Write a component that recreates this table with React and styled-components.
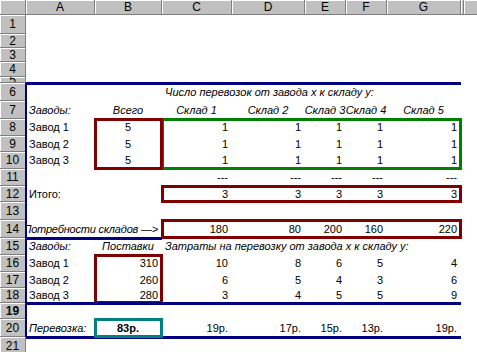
import React from 'react';
import styled, { createGlobalStyle } from 'styled-components';

const GlobalStyle = createGlobalStyle`
  html, body {
    margin: 0;
    padding: 0;
    background: #fff;
    overflow: hidden;
  }
  body {
    font-family: "Liberation Sans", Arial, sans-serif;
  }
`;

// column widths: row header, A..G, hidden H, I
const COLS = [26, 69, 67, 70, 73, 41, 41, 74, 3, 40];
// header + rows 1..21
const ROWS = [15, 19, 14, 14, 15, 6, 18, 18, 17, 16, 17, 17, 16, 18, 18, 17, 17, 16, 15, 16, 18, 18];
const LETTERS = ['A', 'B', 'C', 'D', 'E', 'F', 'G', '', 'I'];

const NAVY = '#000080';
const BROWN = '#800000';
const GREEN = '#008000';
const TEAL = '#008080';

const Sheet = styled.div`
  display: grid;
  grid-template-columns: ${COLS.map((w) => w + 'px').join(' ')};
  grid-template-rows: ${ROWS.map((h) => h + 'px').join(' ')};
  width: 477px;
  height: 352px;
  overflow: hidden;
  font-size: 11px;
  color: #000;
`;

const Corner = styled.div`
  grid-row: 1;
  grid-column: 1;
  background: #c0c0c0;
  border-right: 1px solid #808080;
  border-bottom: 1px solid #808080;
  box-shadow: inset 1px 1px 0 #fff;
`;

const ColHead = styled.div`
  grid-row: 1;
  grid-column: ${(p) => p.$c + 1};
  background: #c0c0c0;
  border-right: 1px solid #808080;
  border-bottom: 1px solid #808080;
  box-shadow: inset 1px 1px 0 #fff;
  display: flex;
  align-items: center;
  justify-content: center;
  font-size: 12px;
  line-height: 14px;
  overflow: hidden;
`;

const RowHead = styled.div`
  grid-row: ${(p) => p.$r + 1};
  grid-column: 1;
  background: #c0c0c0;
  border-right: 1px solid #808080;
  border-bottom: 1px solid #808080;
  box-shadow: inset 1px 1px 0 #fff;
  display: flex;
  align-items: center;
  justify-content: center;
  font-size: 12px;
  line-height: 14px;
  font-weight: ${(p) => (p.$bold ? 700 : 400)};
  overflow: hidden;
`;

const Cell = styled.div`
  grid-row: ${(p) => p.$r + 1};
  grid-column: ${(p) => p.$c + 1} / span ${(p) => p.$span || 1};
  display: flex;
  align-items: center;
  justify-content: ${(p) =>
    p.$align === 'right' ? 'flex-end' : p.$align === 'center' ? 'center' : 'flex-start'};
  padding: 0 4px 0 3px;
  white-space: nowrap;
  font-style: ${(p) => (p.$italic ? 'italic' : 'normal')};
  font-weight: ${(p) => (p.$bold ? 700 : 400)};
  overflow: ${(p) => (p.$clip ? 'hidden' : 'visible')};
  letter-spacing: ${(p) => (p.$clip ? '-0.2px' : 'normal')};
  line-height: 13px;
`;

const Frame = styled.div`
  grid-row: ${(p) => p.$r1 + 1} / ${(p) => p.$r2 + 2};
  grid-column: ${(p) => p.$c1 + 1} / ${(p) => p.$c2 + 2};
  border: 3px solid ${(p) => p.$color};
  margin: -1px;
  pointer-events: none;
`;

const Rule = styled.div`
  grid-row: ${(p) => p.$r + 1};
  grid-column: ${(p) => p.$c1 + 1} / ${(p) => p.$c2 + 2};
  align-self: start;
  height: 3px;
  margin-top: -1px;
  background: ${NAVY};
`;

const SideRule = styled.div`
  grid-row: 7 / 22;
  grid-column: 2;
  justify-self: start;
  width: 2px;
  margin-left: -1px;
  background: ${NAVY};
`;

const plants = [
  { name: 'Завод 1', supply: 310, cost: [10, 8, 6, 5, 4] },
  { name: 'Завод 2', supply: 260, cost: [6, 5, 4, 3, 6] },
  { name: 'Завод 3', supply: 280, cost: [3, 4, 5, 5, 9] },
];
const demand = [180, 80, 200, 160, 220];
const totals = [3, 3, 3, 3, 3];
const costs = ['19р.', '17р.', '15р.', '13р.', '19р.'];

const App = () => (
  <>
    <GlobalStyle />
    <Sheet>
      <Corner />
      {LETTERS.map((l, i) => (
        <ColHead key={i} $c={i + 1}>
          {l}
        </ColHead>
      ))}
      {Array.from({ length: 21 }, (_, i) => (
        <RowHead key={i} $r={i + 1} $bold={i + 1 === 19}>
          {i + 1}
        </RowHead>
      ))}

      <Cell $r={6} $c={3} $span={5} $italic>
        Число перевозок от завода x к складу y:
      </Cell>

      <Cell $r={7} $c={1} $italic>Заводы:</Cell>
      <Cell $r={7} $c={2} $italic $align="center">Всего</Cell>
      {[1, 2, 3, 4, 5].map((n) => (
        <Cell key={n} $r={7} $c={n + 2} $italic $align="center">
          Склад {n}
        </Cell>
      ))}

      {plants.map((p, i) => (
        <React.Fragment key={p.name}>
          <Cell $r={8 + i} $c={1}>{p.name}</Cell>
          <Cell $r={8 + i} $c={2} $align="center">5</Cell>
          {[0, 1, 2, 3, 4].map((j) => (
            <Cell key={j} $r={8 + i} $c={3 + j} $align="right">1</Cell>
          ))}
        </React.Fragment>
      ))}

      {totals.map((v, j) => (
        <Cell key={'d' + j} $r={11} $c={3 + j} $align="right">---</Cell>
      ))}

      <Cell $r={12} $c={1}>Итого:</Cell>
      {totals.map((v, j) => (
        <Cell key={'t' + j} $r={12} $c={3 + j} $align="right">{v}</Cell>
      ))}

      <Cell $r={14} $c={1} $span={2} $italic $align="right" $clip>
        Потребности складов —&gt;
      </Cell>
      {demand.map((v, j) => (
        <Cell key={'n' + j} $r={14} $c={3 + j} $align="right">{v}</Cell>
      ))}

      <Cell $r={15} $c={1} $italic>Заводы:</Cell>
      <Cell $r={15} $c={2} $italic $align="center">Поставки</Cell>
      <Cell $r={15} $c={3} $span={5} $italic>
        Затраты на перевозку от завода x к складу y:
      </Cell>

      {plants.map((p, i) => (
        <React.Fragment key={'c' + p.name}>
          <Cell $r={16 + i} $c={1}>{p.name}</Cell>
          <Cell $r={16 + i} $c={2} $align="right">{p.supply}</Cell>
          {p.cost.map((v, j) => (
            <Cell key={j} $r={16 + i} $c={3 + j} $align="right">{v}</Cell>
          ))}
        </React.Fragment>
      ))}

      <Cell $r={20} $c={1} $italic>Перевозка:</Cell>
      <Cell $r={20} $c={2} $bold $align="center">83р.</Cell>
      {costs.map((v, j) => (
        <Cell key={'p' + j} $r={20} $c={3 + j} $align="right">{v}</Cell>
      ))}

      <SideRule />
      <Rule $r={6} $c1={1} $c2={7} />
      <Rule $r={15} $c1={1} $c2={2} />
      <Rule $r={21} $c1={1} $c2={7} />

      <Frame $r1={8} $r2={10} $c1={3} $c2={7} $color={GREEN} />
      <Frame $r1={8} $r2={10} $c1={2} $c2={2} $color={BROWN} />
      <Frame $r1={12} $r2={12} $c1={3} $c2={7} $color={BROWN} />
      <Frame $r1={14} $r2={14} $c1={3} $c2={7} $color={BROWN} />
      <Frame $r1={16} $r2={18} $c1={2} $c2={2} $color={BROWN} />
      <Frame $r1={20} $r2={20} $c1={2} $c2={2} $color={TEAL} />

      <Rule $r={19} $c1={1} $c2={7} />
    </Sheet>
  </>
);

export default App;
